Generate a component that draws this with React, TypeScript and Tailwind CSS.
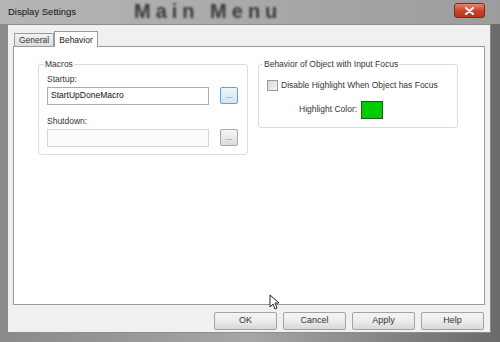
import React from "react";

const font = { fontFamily: '"Liberation Sans", Arial, sans-serif' };

function Browse({ focused }: { focused?: boolean }) {
  return (
    <div
      className={`w-[18px] h-[17px] rounded-[2px] border flex items-end justify-center pb-[3px] text-[8px] leading-none text-[#555] ${
        focused
          ? "border-[#5fa5d8] bg-gradient-to-b from-[#eef6fc] to-[#cfe4f3]"
          : "border-[#a8a8a8] bg-gradient-to-b from-[#f6f6f6] to-[#dcdcdc]"
      }`}
    >
      ...
    </div>
  );
}

function Btn({ label }: { label: string }) {
  return (
    <div className="w-[63px] h-[18px] rounded-[2px] border border-[#a3a3a3] bg-gradient-to-b from-[#f4f4f4] via-[#ececec] to-[#d8d8d8] flex items-center justify-center text-[9px] text-[#333]">
      {label}
    </div>
  );
}

export default function App() {
  return (
    <div
      className="relative w-[500px] h-[342px] overflow-hidden bg-gradient-to-r from-[#8a8a8a] via-[#a6a6a6] to-[#6a6a6a] flex flex-col"
      style={font}
    >
      {/* title bar */}
      <div className="relative h-[24px] shrink-0 flex items-center pl-[8px] bg-gradient-to-r from-[#b5b5b5] via-[#a9a9a9] to-[#9c9c9c]">
        <span className="absolute left-[134px] top-0 text-[20px] leading-[23px] font-semibold tracking-[5px] text-[#3a3a3a] blur-[1.2px]">
          Main Menu
        </span>
        <span className="relative text-[9.5px] text-[#111]">Display Settings</span>
        <div className="absolute right-[15px] top-[3px] w-[31px] h-[15px] rounded-[3px] border border-[#7a2a20] bg-gradient-to-b from-[#e9856f] via-[#c9442c] to-[#b8351f] flex items-center justify-center">
          <svg width="9" height="8" viewBox="0 0 9 8">
            <path d="M1 1 L8 7 M8 1 L1 7" stroke="#fff" strokeWidth="2" strokeLinecap="round" />
          </svg>
        </div>
      </div>

      {/* dialog surface */}
      <div className="flex-1 ml-[7px] mr-[9px] mb-[9px] bg-[#f0f0f0] border border-[#8c8c8c] flex flex-col px-[5px] pt-[5px]">
        {/* tabs */}
        <div className="flex items-end h-[16px] pl-[1px]">
          <div className="h-[13px] px-[4px] border border-b-0 border-[#9a9a9a] bg-gradient-to-b from-[#f2f2f2] to-[#dedede] text-[8.5px] text-[#333] flex items-center">
            General
          </div>
          <div className="h-[16px] px-[4px] border border-b-0 border-[#9a9a9a] bg-white text-[8.5px] text-[#222] flex items-start pt-[2px] -mb-[1px] relative z-10">
            Behavior
          </div>
        </div>

        {/* panel */}
        <div className="h-[259px] bg-white border border-[#9a9a9a] flex gap-[10px] pl-[24px] pt-[17px] whitespace-nowrap">
          {/* Macros */}
          <div className="relative w-[210px] h-[91px] border border-[#dcdcdc] rounded-[3px] px-[8px] pt-[8px] text-[8.5px] text-[#333]">
            <span className="absolute left-[5px] top-[-5px] bg-white px-[1px] leading-none">Macros</span>
            <div>Startup:</div>
            <div className="flex items-center gap-[11px] mt-[1px]">
              <div className="w-[162px] h-[18px] border border-[#abadb3] flex items-center px-[3px] text-[#111]">
                StartUpDoneMacro
              </div>
              <Browse focused />
            </div>
            <div className="mt-[10px]">Shutdown:</div>
            <div className="flex items-center gap-[11px] mt-[1px]">
              <div className="w-[162px] h-[18px] border border-[#d6d6d6] bg-[#fbfbfb]" />
              <Browse />
            </div>
          </div>

          {/* Behavior of Object */}
          <div className="relative w-[200px] h-[64px] border border-[#dcdcdc] rounded-[3px] px-[8px] pt-[14px] text-[8.5px] text-[#333]">
            <span className="absolute left-[4px] top-[-5px] bg-white px-[1px] leading-none">
              Behavior of Object with Input Focus
            </span>
            <div className="flex items-center gap-[3px]">
              <div className="w-[11px] h-[11px] border border-[#9a9a9a] bg-gradient-to-br from-[#d8d8d8] to-[#f4f4f4]" />
              <span>Disable Highlight When Object has Focus</span>
            </div>
            <div className="flex items-center gap-[4px] mt-[9px] pl-[32px]">
              <span>Highlight Color:</span>
              <div className="w-[22px] h-[18px] bg-[#00cc00] border border-[#1a5a1a]" />
            </div>
          </div>
        </div>

        {/* bottom buttons */}
        <div className="flex justify-end gap-[6px] pr-[1px] mt-[7px]">
          <Btn label="OK" />
          <Btn label="Cancel" />
          <Btn label="Apply" />
          <Btn label="Help" />
        </div>
      </div>

      {/* mouse cursor */}
      <svg className="absolute left-[269px] top-[294px]" width="11" height="16" viewBox="0 0 11 16">
        <path d="M1 1 L1 13 L4 10 L6 15 L8 14 L6 9 L10 9 Z" fill="#fff" stroke="#222" strokeWidth="1" />
      </svg>
    </div>
  );
}
